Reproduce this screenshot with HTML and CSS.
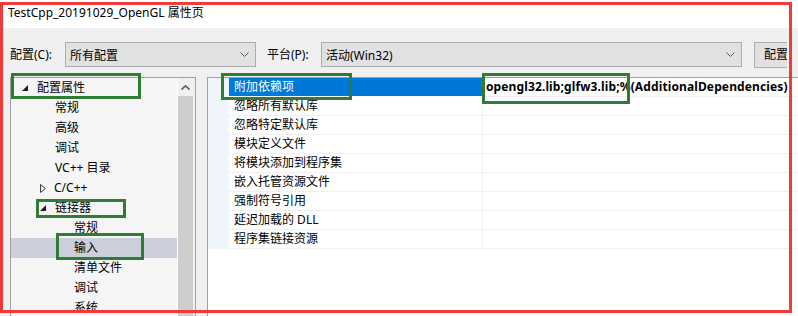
FILE: index.html
```html
<!DOCTYPE html>
<html lang="zh-CN">
<head>
    <meta charset="UTF-8">
    <title>TestCpp_20191029_OpenGL 属性页</title>
    <link rel="stylesheet" href="styles.css">
</head>
<body>
    <div class="titlebar">TestCpp_20191029_OpenGL 属性页</div>

    <div class="toolbar">
        <span class="field-label">配置(C):</span>
        <div class="combo combo-config">
            <span>所有配置</span>
            <svg class="chevron" width="9" height="5" viewBox="0 0 9 5"><polyline points="0.5,0.5 4.5,4.5 8.5,0.5" fill="none" stroke="#5a5a5a" stroke-width="1"/></svg>
        </div>
        <span class="field-label platform-label">平台(P):</span>
        <div class="combo combo-platform">
            <span>活动(Win32)</span>
            <svg class="chevron" width="9" height="5" viewBox="0 0 9 5"><polyline points="0.5,0.5 4.5,4.5 8.5,0.5" fill="none" stroke="#5a5a5a" stroke-width="1"/></svg>
        </div>
        <div class="btn">配置管理器(O)...</div>
    </div>

    <div class="main">
        <div class="tree">
            <div class="tree-list">
                <div class="tree-item level0"><svg class="expand" width="6" height="6" viewBox="0 0 6 6"><polygon points="6,0 6,6 0,6" fill="#1e1e1e"/></svg>配置属性</div>
                <div class="tree-item level1">常规</div>
                <div class="tree-item level1">高级</div>
                <div class="tree-item level1">调试</div>
                <div class="tree-item level1">VC++ 目录</div>
                <div class="tree-item level1"><svg class="collapsed" width="6" height="9" viewBox="0 0 6 9"><polygon points="0.5,0.5 5.5,4.5 0.5,8.5" fill="none" stroke="#404040" stroke-width="1"/></svg>C/C++</div>
                <div class="tree-item level1"><svg class="expand" width="6" height="6" viewBox="0 0 6 6"><polygon points="6,0 6,6 0,6" fill="#1e1e1e"/></svg>链接器</div>
                <div class="tree-item level2">常规</div>
                <div class="tree-item level2 selected">输入</div>
                <div class="tree-item level2">清单文件</div>
                <div class="tree-item level2">调试</div>
                <div class="tree-item level2">系统</div>
            </div>
            <div class="scrollbar">
                <div class="scroll-up">
                    <svg width="9" height="5" viewBox="0 0 9 5"><polyline points="0.5,4.5 4.5,0.8 8.5,4.5" fill="none" stroke="#606060" stroke-width="1.6"/></svg>
                </div>
                <div class="scroll-thumb"></div>
            </div>
        </div>

        <div class="grid">
            <div class="grid-row">
                <div class="stripe"></div>
                <div class="name active">附加依赖项</div>
                <div class="value">opengl32.lib;glfw3.lib;%(AdditionalDependencies)</div>
            </div>
            <div class="grid-row"><div class="stripe"></div><div class="name">忽略所有默认库</div><div class="value"></div></div>
            <div class="grid-row"><div class="stripe"></div><div class="name">忽略特定默认库</div><div class="value"></div></div>
            <div class="grid-row"><div class="stripe"></div><div class="name">模块定义文件</div><div class="value"></div></div>
            <div class="grid-row"><div class="stripe"></div><div class="name">将模块添加到程序集</div><div class="value"></div></div>
            <div class="grid-row"><div class="stripe"></div><div class="name">嵌入托管资源文件</div><div class="value"></div></div>
            <div class="grid-row"><div class="stripe"></div><div class="name">强制符号引用</div><div class="value"></div></div>
            <div class="grid-row"><div class="stripe"></div><div class="name">延迟加载的 DLL</div><div class="value"></div></div>
            <div class="grid-row"><div class="stripe"></div><div class="name">程序集链接资源</div><div class="value"></div></div>
        </div>
    </div>

    <!-- annotation boxes drawn over the screenshot -->
    <div class="mark red-frame"></div>
    <div class="mark green box-props"></div>
    <div class="mark green box-linker"></div>
    <div class="mark green box-input"></div>
    <div class="mark green box-deps"></div>
    <div class="mark green box-value"></div>
</body>
</html>
```

FILE: styles.css
```css
* {
    margin: 0;
    padding: 0;
    box-sizing: border-box;
}

body {
    width: 798px;
    height: 316px;
    overflow: hidden;
    position: relative;
    background: #f0f0f0;
    color: #000;
    font-family: 'Noto Sans', 'Noto Sans CJK SC', sans-serif;
    font-size: 12px;
}

/* Title bar */
.titlebar {
    height: 28px;
    background: #fff;
    padding-left: 8px;
    line-height: 26px;
    white-space: nowrap;
}

/* Configuration / platform row */
.toolbar {
    height: 49px;
    display: flex;
    align-items: flex-start;
    padding: 14px 0 0 10px;
    white-space: nowrap;
    overflow: hidden;
}

.toolbar > * {
    flex-shrink: 0;
}

.field-label {
    width: 55px;
    line-height: 25px;
}

.platform-label {
    width: 54px;
    margin-left: 11px;
}

.combo {
    height: 25px;
    background: #e1e1e1;
    border: 1px solid #adadad;
    display: flex;
    align-items: center;
    justify-content: space-between;
    padding: 0 6px 0 4px;
}

.combo-config {
    width: 191px;
}

.combo-platform {
    width: 421px;
}

.chevron {
    flex-shrink: 0;
}

.btn {
    width: 33px;
    height: 26px;
    margin-left: 12px;
    padding-left: 9px;
    background: #e1e1e1;
    border: 1px solid #adadad;
    border-right: none;
    line-height: 24px;
    overflow: hidden;
}

/* Tree and property grid */
.main {
    display: flex;
    gap: 11px;
    padding-left: 10px;
    height: 239px;
}

.tree {
    width: 186px;
    flex-shrink: 0;
    border: 1px solid #a0a0a0;
    border-bottom: none;
    background: #f5f5f5;
    display: flex;
}

.tree-list {
    flex: 1;
    overflow: hidden;
}

.tree-item {
    height: 20px;
    line-height: 20px;
    display: flex;
    align-items: center;
    white-space: nowrap;
}

.tree-item svg {
    margin-right: 9px;
}

.level0 {
    padding-left: 11px;
}

.level1 {
    padding-left: 44px;
}

.level1 svg {
    margin-left: -15px;
}

.level1 .collapsed {
    margin-right: 8px;
}

.level2 {
    padding-left: 63px;
}

.selected {
    background: #cccedb;
}

.scrollbar {
    width: 18px;
    flex-shrink: 0;
    border-left: 1px solid #fff;
    background: #f0f0f0;
    padding: 0 2px 0 0;
    display: flex;
    flex-direction: column;
}

.scroll-up {
    height: 18px;
    display: flex;
    align-items: center;
    justify-content: center;
}

.scroll-thumb {
    flex: 1;
    background: #cdcdcd;
}

.grid {
    flex: 1;
    min-width: 0;
    border: 1px solid #a0a0a0;
    border-bottom: none;
    border-right: none;
    background: #fff;
    overflow: hidden;
}

.grid-row {
    height: 19px;
    display: flex;
}

.stripe {
    width: 21px;
    flex-shrink: 0;
    background: #f0f5fc;
}

.name {
    width: 253px;
    flex-shrink: 0;
    padding-left: 5px;
    line-height: 18px;
    border-bottom: 1px solid #f0f0f0;
    white-space: nowrap;
}

.name.active {
    background: #0078d7;
    color: #fff;
    border-bottom-color: #fff;
}

.value {
    flex: 1;
    min-width: 0;
    padding-left: 3px;
    line-height: 18px;
    border-left: 1px solid #f0f0f0;
    border-bottom: 1px solid #f0f0f0;
    font-weight: bold;
    letter-spacing: 0.12px;
    white-space: nowrap;
    overflow: hidden;
}

/* Annotation overlays */
.mark {
    position: absolute;
    pointer-events: none;
}

.red-frame {
    left: 0;
    top: 2px;
    width: 792px;
    height: 311px;
    border: 3px solid #f23a3a;
}

.green {
    border: 3px solid #2f7d32;
}

.box-props {
    left: 11px;
    top: 73px;
    width: 130px;
    height: 26px;
}

.box-linker {
    left: 36px;
    top: 199px;
    width: 90px;
    height: 19px;
}

.box-input {
    left: 56px;
    top: 233px;
    width: 88px;
    height: 27px;
}

.box-deps {
    left: 221px;
    top: 73px;
    width: 131px;
    height: 27px;
}

.box-value {
    left: 482px;
    top: 73px;
    width: 148px;
    height: 31px;
}
```
